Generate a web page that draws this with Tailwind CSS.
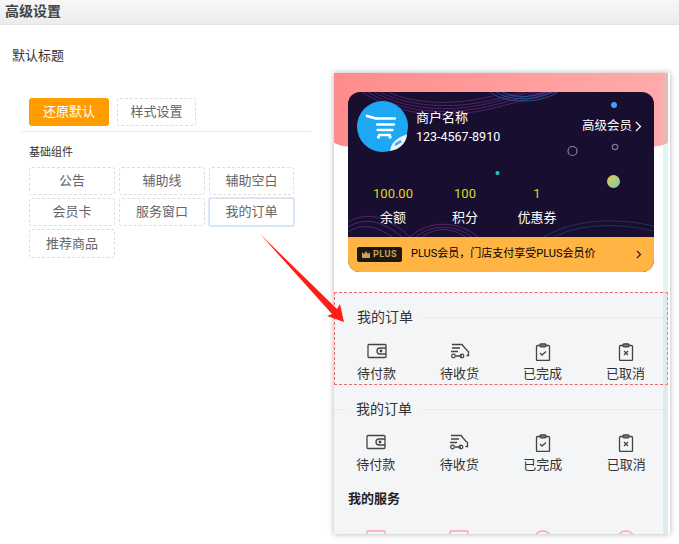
<!DOCTYPE html>
<html lang="zh">
<head>
  <meta charset="UTF-8" />
  <title>高级设置</title>
  <script src="https://cdn.jsdelivr.net/npm/@tailwindcss/browser@4"></script>
</head>
<body class="relative w-[679px] h-[544px] overflow-hidden bg-white text-[#333] font-['Roboto','Noto_Sans_CJK_SC',sans-serif]">
  <header class="h-[25px] pl-[5px] bg-gradient-to-b from-[#f7f7f7] to-[#ececec] border-b border-[#e2e2e2] text-[14px] leading-[23px] font-bold text-[#444]">高级设置</header>

  <div class="flex items-start">
    <!-- left panel -->
    <div class="w-[334px] shrink-0">
      <p class="pl-3 pt-[21px] text-[13px] leading-[20px] text-[#333]">默认标题</p>
      <div class="ml-[21px] w-[290px] mt-[32px] pl-2 pb-[5px] border-b border-[#e8e8e8] flex gap-2">
        <button class="w-20 h-7 rounded-[3px] bg-[#ff9c00] text-white text-[13px]">还原默认</button>
        <button class="w-[79px] h-7 rounded-[3px] border border-dashed border-[#ddd] text-[#666] text-[13px]">样式设置</button>
      </div>
      <p class="ml-[29px] mt-[13px] text-[11px] leading-[16px] text-[#333]">基础组件</p>
      <div class="ml-[29px] mt-[6px] w-[265px] grid grid-cols-[86px_86px_85px] gap-x-1 gap-y-[3px] text-[13px] text-[#666]">
        <button class="h-7 rounded-[3px] border border-dashed border-[#ddd]">公告</button>
        <button class="h-7 rounded-[3px] border border-dashed border-[#ddd]">辅助线</button>
        <button class="h-7 rounded-[3px] border border-dashed border-[#ddd]">辅助空白</button>
        <button class="h-7 rounded-[3px] border border-dashed border-[#ddd]">会员卡</button>
        <button class="h-7 rounded-[3px] border border-dashed border-[#ddd]">服务窗口</button>
        <button class="h-[30px] -m-px rounded-[3px] border-2 border-[#d9e8fa] outline outline-1 -outline-offset-2 outline-dashed outline-[#ddd]">我的订单</button>
        <button class="h-[29px] rounded-[3px] border border-dashed border-[#ddd]">推荐商品</button>
      </div>
    </div>

    <!-- phone preview -->
    <div class="relative mt-[48px] w-[336px] h-[461px] shrink-0 overflow-hidden bg-white shadow-[0_0_6px_rgba(0,0,0,0.3)]">
      <div class="relative w-[334px] h-full flex flex-col bg-white">
        <div class="absolute left-0 top-0 w-[334px] h-[81px] bg-gradient-to-r from-[#ff8c8c] to-[#ffabab] rounded-b-[50%_12px]"></div>

        <!-- member card -->
        <div class="relative shrink-0 mx-[14px] mt-[19px] w-[306px] h-[180px] rounded-xl overflow-hidden bg-[#180f30] text-white">
          <svg class="absolute left-0 top-0" width="306" height="145" viewBox="0 0 306 145" fill="none">
            <g stroke="#7a3596" stroke-opacity="0.55">
              <path d="M14 0C50 24 100 28 150 15S190 3 210 0" />
              <path d="M20 0C54 21 102 25 150 12S188 2 205 0" />
              <path d="M26 0C58 18 104 22 150 9S186 1 198 0" />
              <path d="M32 0C62 15 106 18 148 7S178 0 190 0" />
              <path d="M40 0C66 12 106 14 144 4" />
            </g>
            <g stroke="#3466b4" stroke-opacity="0.7">
              <path d="M142 0C158 12 192 12 210 0" />
              <path d="M148 0C162 9 188 9 204 0" />
              <path d="M154 0C166 6 184 6 198 0" />
            </g>
            <g stroke="#7a3596" stroke-opacity="0.6">
              <path d="M62 145C80 128 110 128 130 145" />
              <path d="M68 145C84 132 106 132 124 145" />
              <path d="M74 145C88 135 102 135 118 145" />
              <path d="M0 130C20 118 42 126 62 145" />
              <path d="M0 135C18 124 36 130 54 145" />
              <path d="M0 140C14 130 30 135 44 145" />
            </g>
            <g stroke="#29406e" stroke-opacity="0.7">
              <path d="M196 145C228 126 270 126 306 134" />
              <path d="M206 145C234 131 270 131 306 139" />
            </g>
            <circle cx="266" cy="13" r="3" fill="#38a8f5" />
            <circle cx="224.500" cy="59" r="4.500" stroke="#8c8890" stroke-width="1.200" />
            <circle cx="267" cy="55" r="2.700" stroke="#7d7885" stroke-width="1.200" />
            <circle cx="149.500" cy="81" r="2" fill="#1ec8cc" />
            <defs><linearGradient id="dotFill" x1="0" y1="0" x2="1" y2="1"><stop offset="0" stop-color="#e8c84e" /><stop offset="1" stop-color="#78d0b0" /></linearGradient></defs>
            <circle cx="265.500" cy="89.500" r="6.500" fill="url(#dotFill)" />
          </svg>

          <div class="relative flex pl-[9px] pt-[9px]">
            <svg width="51" height="51" viewBox="0 0 51 51">
              <circle cx="25.500" cy="25.500" r="25.500" fill="#1ea7f3" />
              <path d="M10 15l9 2.500" fill="none" stroke="#fff" stroke-width="2.800" stroke-linecap="round" />
              <path d="M19 17.500h19M20 23.500h17M20.500 29h15M22 34h11" fill="none" stroke="#fff" stroke-width="2.300" stroke-linecap="round" />
              <circle cx="21.500" cy="36" r="1.700" fill="#fff" />
              <circle cx="33" cy="36" r="1.700" fill="#fff" />
              <path d="M33 50C34 44 36 42 38 40C42 36 46 35 50 33C50 42 42 49 33 50z" fill="#e8f4fb" />
              <path d="M38 44l6-4" fill="none" stroke="#4aa5e0" stroke-width="2.500" />
            </svg>
            <div class="ml-[8px] pt-[7px] text-[13px] leading-[20px]">
              <p>商户名称</p>
              <p class="mt-[-1px] text-[12.500px]">123-4567-8910</p>
            </div>
            <div class="absolute right-[12px] top-[24px] flex items-center text-[12.500px] leading-[20px]">
              高级会员
              <svg class="ml-[3px]" width="7" height="11" viewBox="0 0 7 11" fill="none"><path d="M1 1l4.500 4.500L1 10" stroke="#fff" stroke-width="1.200" /></svg>
            </div>
          </div>

          <div class="relative mt-[32px] ml-[9px] w-[216px] grid grid-cols-3 text-center text-[13px]">
            <div><p class="leading-[20px] text-[#d8d81e]">100.00</p><p class="mt-1 leading-[20px]">余额</p></div>
            <div><p class="leading-[20px] text-[#d8d81e]">100</p><p class="mt-1 leading-[20px]">积分</p></div>
            <div><p class="leading-[20px] text-[#d8d81e]">1</p><p class="mt-1 leading-[20px]">优惠券</p></div>
          </div>

          <div class="absolute left-0 bottom-0 w-full h-[35px] pl-[9px] pr-[12px] bg-[#ffb444] flex items-center text-black">
            <span class="w-[45px] h-[15px] rounded-[2px] bg-[#1b1712] flex items-center justify-center gap-[3px] text-[#c9a352] text-[9px] font-bold tracking-[0.5px]">
              <svg width="8" height="7" viewBox="0 0 8 7"><path d="M0 1l2 2 2-3 2 3 2-2v6H0z" fill="#c9a352" /></svg>
              PLUS
            </span>
            <span class="ml-[9px] text-[11px]">PLUS会员，门店支付享受PLUS会员价</span>
            <svg class="ml-auto" width="6" height="9" viewBox="0 0 6 9" fill="none"><path d="M1 1l3.500 3.500L1 8" stroke="#222" stroke-width="1.200" /></svg>
          </div>
        </div>

        <!-- order sections -->
        <div class="relative mt-[20px] flex-1 bg-[#f4f5f7]">
          <section class="relative h-[93px] border border-dashed border-[#f2626b]">
            <div class="flex items-center pl-[22px] pt-[14px]">
              <h3 class="text-[14px] leading-[20px] text-[#333]">我的订单</h3>
              <span class="ml-[9px] flex-1 h-px bg-[#e8eaec]"></span>
            </div>
            <div class="grid grid-cols-4 mt-[16px] text-center text-[13px] leading-[18px] text-[#333]">
              <div class="flex flex-col items-center">
                <svg width="20" height="16" viewBox="0 0 20 16" fill="none" stroke="#444" stroke-width="1.300"><rect x="1" y="1.500" width="18" height="13" rx="1" /><path d="M19 5h-6a2.500 2.500 0 000 6h6" /><circle cx="14" cy="8" r="0.800" fill="#444" /></svg>
                <span class="mt-[6px]">待付款</span>
              </div>
              <div class="flex flex-col items-center">
                <svg width="20" height="16" viewBox="0 0 20 16" fill="none" stroke="#444" stroke-width="1.300"><path d="M2 1.500h10l5 6 1.500 1v4h-2M12 13h-6M2 5h8M1 8.500h7" /><circle cx="3.500" cy="13" r="1.800" /><circle cx="12" cy="13" r="1.800" /></svg>
                <span class="mt-[6px]">待收货</span>
              </div>
              <div class="flex flex-col items-center">
                <svg width="16" height="18" viewBox="0 0 16 18" fill="none" stroke="#444" stroke-width="1.300"><rect x="1.500" y="2.500" width="13" height="15" rx="1" /><rect x="5" y="0.800" width="6" height="3" rx="1" fill="#777" /><path d="M5 10l2 2 4-3.500" /></svg>
                <span class="mt-[4px]">已完成</span>
              </div>
              <div class="flex flex-col items-center">
                <svg width="16" height="18" viewBox="0 0 16 18" fill="none" stroke="#444" stroke-width="1.300"><rect x="1.500" y="2.500" width="13" height="15" rx="1" /><rect x="5" y="0.800" width="6" height="3" rx="1" fill="#777" /><path d="M6 8l4 4M10 8l-4 4" /></svg>
                <span class="mt-[4px]">已取消</span>
              </div>
            </div>
          </section>

          <section>
            <div class="flex items-center pt-[14px]">
              <span class="w-[13px] h-px bg-[#e8eaec]"></span>
              <h3 class="ml-[9px] text-[14px] leading-[20px] text-[#333]">我的订单</h3>
              <span class="ml-[9px] flex-1 h-px bg-[#e8eaec]"></span>
            </div>
            <div class="grid grid-cols-4 mt-[15px] text-center text-[13px] leading-[18px] text-[#333]">
              <div class="flex flex-col items-center">
                <svg width="20" height="16" viewBox="0 0 20 16" fill="none" stroke="#444" stroke-width="1.300"><rect x="1" y="1.500" width="18" height="13" rx="1" /><path d="M19 5h-6a2.500 2.500 0 000 6h6" /><circle cx="14" cy="8" r="0.800" fill="#444" /></svg>
                <span class="mt-[6px]">待付款</span>
              </div>
              <div class="flex flex-col items-center">
                <svg width="20" height="16" viewBox="0 0 20 16" fill="none" stroke="#444" stroke-width="1.300"><path d="M2 1.500h10l5 6 1.500 1v4h-2M12 13h-6M2 5h8M1 8.500h7" /><circle cx="3.500" cy="13" r="1.800" /><circle cx="12" cy="13" r="1.800" /></svg>
                <span class="mt-[6px]">待收货</span>
              </div>
              <div class="flex flex-col items-center">
                <svg width="16" height="18" viewBox="0 0 16 18" fill="none" stroke="#444" stroke-width="1.300"><rect x="1.500" y="2.500" width="13" height="15" rx="1" /><rect x="5" y="0.800" width="6" height="3" rx="1" fill="#777" /><path d="M5 10l2 2 4-3.500" /></svg>
                <span class="mt-[4px]">已完成</span>
              </div>
              <div class="flex flex-col items-center">
                <svg width="16" height="18" viewBox="0 0 16 18" fill="none" stroke="#444" stroke-width="1.300"><rect x="1.500" y="2.500" width="13" height="15" rx="1" /><rect x="5" y="0.800" width="6" height="3" rx="1" fill="#777" /><path d="M6 8l4 4M10 8l-4 4" /></svg>
                <span class="mt-[4px]">已取消</span>
              </div>
            </div>
          </section>

          <h3 class="ml-[14px] mt-[15px] text-[13px] leading-[20px] font-bold text-[#222]">我的服务</h3>
          <div class="grid grid-cols-4 mt-[21px] justify-items-center">
            <svg width="20" height="20" viewBox="0 0 20 20" fill="none" stroke="#ff9eb0" stroke-width="1.300"><rect x="1" y="1" width="18" height="18" rx="1" /><path d="M1 5h18" /></svg>
            <svg width="20" height="20" viewBox="0 0 20 20" fill="none" stroke="#ff9eb0" stroke-width="1.300"><rect x="1" y="1" width="18" height="18" rx="1" /></svg>
            <svg width="20" height="20" viewBox="0 0 20 20" fill="none" stroke="#ff9eb0" stroke-width="1.300"><circle cx="10" cy="10" r="9" /><path d="M6 7h1M13 7h1" /></svg>
            <svg width="20" height="20" viewBox="0 0 20 20" fill="none" stroke="#ff9eb0" stroke-width="1.300"><circle cx="10" cy="10" r="9" /><circle cx="10" cy="8" r="3" /></svg>
          </div>
        </div>

        <!-- scrollbar strip -->
        <div class="absolute right-0 top-0 w-[5px] h-full bg-[#a8dcd9]/35"></div>
      </div>
    </div>
  </div>

  <!-- annotation arrow -->
  <svg class="absolute left-0 top-0 pointer-events-none" width="679" height="544" viewBox="0 0 679 544">
    <polygon points="260,234 337,309 340,304 344,322 327,316 332,314" fill="#ff1e14" />
  </svg>
</body>
</html>
